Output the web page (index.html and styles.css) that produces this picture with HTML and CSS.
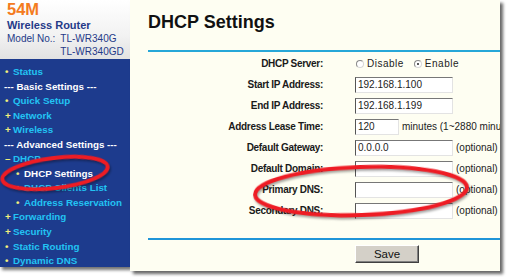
FILE: index.html
```html
<!DOCTYPE html>
<html lang="en">
<head>
    <meta charset="UTF-8">
    <title>DHCP Settings</title>
    <link rel="stylesheet" href="styles.css">
</head>
<body>
    <div class="page">
        <div class="sidebar">
            <div class="brand">
                <div class="brand-speed">54M</div>
                <div class="brand-name">Wireless Router</div>
                <div class="brand-model">
                    <span>Model No.:</span>
                    <span>TL-WR340G<br>TL-WR340GD</span>
                </div>
            </div>
            <ul class="menu">
                <li class="item"><span class="mark">&bull;</span>Status</li>
                <li class="section">--- Basic Settings ---</li>
                <li class="item"><span class="mark">&bull;</span>Quick Setup</li>
                <li class="item"><span class="mark">+</span>Network</li>
                <li class="item"><span class="mark">+</span>Wireless</li>
                <li class="section">--- Advanced Settings ---</li>
                <li class="item"><span class="mark">&ndash;</span>DHCP</li>
                <li class="item sub current"><span class="mark">&bull;</span>DHCP Settings</li>
                <li class="item sub"><span class="mark">&bull;</span>DHCP Clients List</li>
                <li class="item sub"><span class="mark">&bull;</span>Address Reservation</li>
                <li class="item"><span class="mark">+</span>Forwarding</li>
                <li class="item"><span class="mark">+</span>Security</li>
                <li class="item"><span class="mark">&bull;</span>Static Routing</li>
                <li class="item"><span class="mark">&bull;</span>Dynamic DNS</li>
            </ul>
        </div>

        <div class="content">
            <h1>DHCP Settings</h1>

            <div class="form">
                <label>DHCP Server:</label>
                <div class="field">
                    <span class="radio"></span><span class="radio-text">Disable</span>
                    <span class="radio checked"></span><span class="radio-text">Enable</span>
                </div>

                <label>Start IP Address:</label>
                <div class="field"><span class="input">192.168.1.100</span></div>

                <label>End IP Address:</label>
                <div class="field"><span class="input">192.168.1.199</span></div>

                <label>Address Lease Time:</label>
                <div class="field"><span class="input short">120</span><span class="hint">minutes (1~2880 minutes)</span></div>

                <label>Default Gateway:</label>
                <div class="field"><span class="input">0.0.0.0</span><span class="hint">(optional)</span></div>

                <label>Default Domain:</label>
                <div class="field"><span class="input"></span><span class="hint">(optional)</span></div>

                <label>Primary DNS:</label>
                <div class="field"><span class="input"></span><span class="hint">(optional)</span></div>

                <label>Secondary DNS:</label>
                <div class="field"><span class="input"></span><span class="hint">(optional)</span></div>
            </div>

            <div class="actions">
                <button type="button">Save</button>
            </div>
        </div>

        <!-- annotations drawn over the screenshot -->
        <svg class="marks" width="513" height="277" viewBox="0 0 513 277">
            <ellipse cx="55" cy="173" rx="53" ry="15" transform="rotate(-7 55 173)"/>
            <ellipse cx="361" cy="191" rx="106" ry="24" transform="rotate(-2 361 191)"/>
        </svg>
    </div>
</body>
</html>
```

FILE: styles.css
```css
body {
    margin: 0;
    background-color: #ffffff;
    font-family: 'Liberation Sans', Arial, sans-serif;
}

.page {
    position: relative;
    display: flex;
    align-items: flex-start;
    width: 513px;
    height: 277px;
    overflow: hidden;
}

/* menu de gauche */
.sidebar {
    width: 130px;
    height: 267px;
    flex-shrink: 0;
    box-shadow: 2px 3px 3px rgba(0, 0, 0, 0.55);
    background-color: #1d3b8d;
}

.brand {
    height: 59px;
    padding: 0 0 0 7px;
    box-sizing: border-box;
    background: linear-gradient(#ffffff, #f2f2f2 60%, #e2e2e2);
    color: #253a88;
}

.brand-speed {
    font-size: 16.5px;
    line-height: 19px;
    font-weight: bold;
    color: #f47b20;
}

.brand-name {
    font-size: 11px;
    line-height: 12.6px;
    font-weight: bold;
}

.brand-model {
    display: flex;
    gap: 5px;
    font-size: 10px;
    line-height: 13.7px;
}

.menu {
    list-style: none;
    margin: 0;
    padding: 6px 0 0 0;
    font-size: 9.8px;
    line-height: 14.55px;
    font-weight: bold;
}

.item {
    display: flex;
    padding-left: 5px;
    color: #22c3f3;
    white-space: nowrap;
}

.item.sub {
    padding-left: 16px;
}

.item.current {
    color: #ffffff;
}

.mark {
    width: 8px;
    color: #f3ee7c;
}

.section {
    padding-left: 4px;
    color: #ffffff;
    white-space: nowrap;
}

/* contenu */
.content {
    width: 370px;
    height: 271px;
    padding-left: 18px;
    box-sizing: border-box;
    flex-shrink: 0;
    background-color: #fefef2;
    box-shadow: 3px 3px 3px rgba(0, 0, 0, 0.6);
    overflow: hidden;
}

h1 {
    margin: 0;
    height: 52px;
    padding-top: 11px;
    box-sizing: border-box;
    font-size: 18px;
    line-height: 22px;
    color: #111111;
    border-bottom: 2px solid #27a7d8;
}

.form {
    display: grid;
    grid-template-columns: 175px auto;
    grid-auto-rows: 21px;
    column-gap: 32px;
    align-items: center;
    padding-top: 1px;
}

label {
    text-align: right;
    font-size: 10px;
    letter-spacing: -0.3px;
    font-weight: bold;
    color: #1a1a1a;
    white-space: nowrap;
}

.field {
    display: flex;
    align-items: center;
    font-size: 10px;
    color: #222222;
    white-space: nowrap;
}

.radio {
    width: 6px;
    height: 6px;
    margin: 0 3px 0 1px;
    border-radius: 50%;
    border: 1px solid #8a8a8a;
    border-bottom-color: #d8d8d8;
    border-right-color: #d8d8d8;
    background-color: #ffffff;
    position: relative;
}

.radio.checked::after {
    content: '';
    position: absolute;
    left: 2px;
    top: 2px;
    width: 2px;
    height: 2px;
    border-radius: 50%;
    background-color: #222222;
}

.radio-text {
    margin-right: 9px;
    letter-spacing: 0.5px;
}

.input {
    width: 98px;
    height: 16px;
    padding-left: 2px;
    box-sizing: border-box;
    border: 1px solid #e3e3e3;
    border-top-color: #777777;
    border-left-color: #555555;
    background-color: #ffffff;
    line-height: 14px;
}

.input.short {
    width: 44px;
}

.hint {
    margin-left: 3px;
}

.actions {
    margin-top: 17px;
    padding-left: 207px;
    border-top: 2px solid #1f95d8;
    padding-top: 4px;
}

button {
    width: 64px;
    height: 18px;
    padding: 0;
    font-family: 'Liberation Sans', Arial, sans-serif;
    font-size: 11.5px;
    color: #111111;
    background-color: #d4d0c8;
    border: 1px solid #404040;
    border-top-color: #ffffff;
    border-left-color: #ffffff;
    box-shadow: inset -1px -1px 0 #808080;
}

/* cercles rouges */
.marks {
    position: absolute;
    top: 0;
    left: 0;
    pointer-events: none;
}

.marks ellipse {
    fill: none;
    stroke: #ee1c24;
    stroke-width: 4;
    filter: drop-shadow(1px 2px 1px rgba(0, 0, 0, 0.35));
}
```
